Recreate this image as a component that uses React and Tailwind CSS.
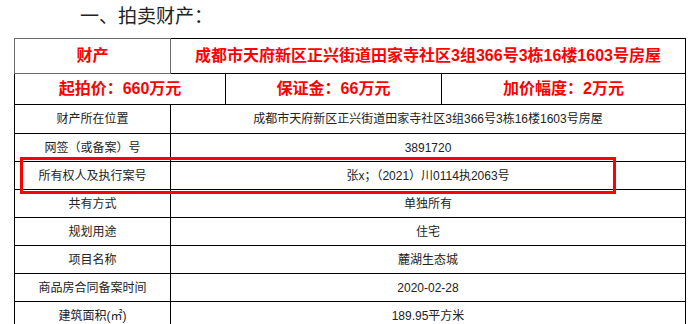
import React from "react";

const FONT = { fontFamily: '"Liberation Sans", "Noto Sans CJK SC", sans-serif' };

const ROWS = [
  { label: "财产所在位置", value: "成都市天府新区正兴街道田家寺社区3组366号3栋16楼1603号房屋", h: "h-[29px]" },
  { label: "网签（或备案）号", value: "3891720", h: "h-[28px]" },
  { label: "所有权人及执行案号", value: "张x；（2021）川0114执2063号", h: "h-[28px]" },
  { label: "共有方式", value: "单独所有", h: "h-[28px]" },
  { label: "规划用途", value: "住宅", h: "h-[28px]" },
  { label: "项目名称", value: "麓湖生态城", h: "h-[28px]" },
  { label: "商品房合同备案时间", value: "2020-02-28", h: "h-[28px]" },
  { label: "建筑面积(㎡)", value: "189.95平方米", h: "h-[28px]" },
];

export default function App() {
  return (
    <div className="w-[700px] h-[324px] overflow-hidden bg-white" style={FONT}>
      {/* Heading */}
      <div className="h-[38px] pl-[80px] pt-[5px] text-[19px] leading-[24px] text-[#222]">
        一、拍卖财产：
      </div>

      <div className="relative ml-[14px] w-[672px]">
        {/* Row 1 */}
        <div className="flex h-[36px] text-[16px] font-bold text-[#ff0000]">
          <div className="w-[157px] flex items-center justify-center border border-[#6b6b6b]">财产</div>
          <div className="w-[515px] flex items-center justify-center border-t border-r border-b border-black">
            成都市天府新区正兴街道田家寺社区3组366号3栋16楼1603号房屋
          </div>
        </div>

        {/* Row 2 */}
        <div className="flex h-[31px] text-[16px] font-bold text-[#ff0000]">
          <div className="w-[212px] flex items-center justify-center border-l border-r border-b border-black">起拍价：660万元</div>
          <div className="w-[216px] flex items-center justify-center border-r border-b border-black">保证金：66万元</div>
          <div className="w-[244px] flex items-center justify-center border-r border-b border-black">加价幅度：2万元</div>
        </div>

        {/* Detail rows */}
        {ROWS.map((row) => (
          <div key={row.label} className={`flex ${row.h} text-[12px] text-[#222]`}>
            <div className="w-[157px] flex items-center justify-center border-l border-r border-b border-black">
              {row.label}
            </div>
            <div className="w-[515px] flex items-center justify-center border-r border-b border-black">
              {row.value}
            </div>
          </div>
        ))}

        {/* Highlight box */}
        <div className="absolute left-[6px] top-[119px] w-[596px] h-[37px] border-[3px] border-[#ff0000]" />
      </div>
    </div>
  );
}
